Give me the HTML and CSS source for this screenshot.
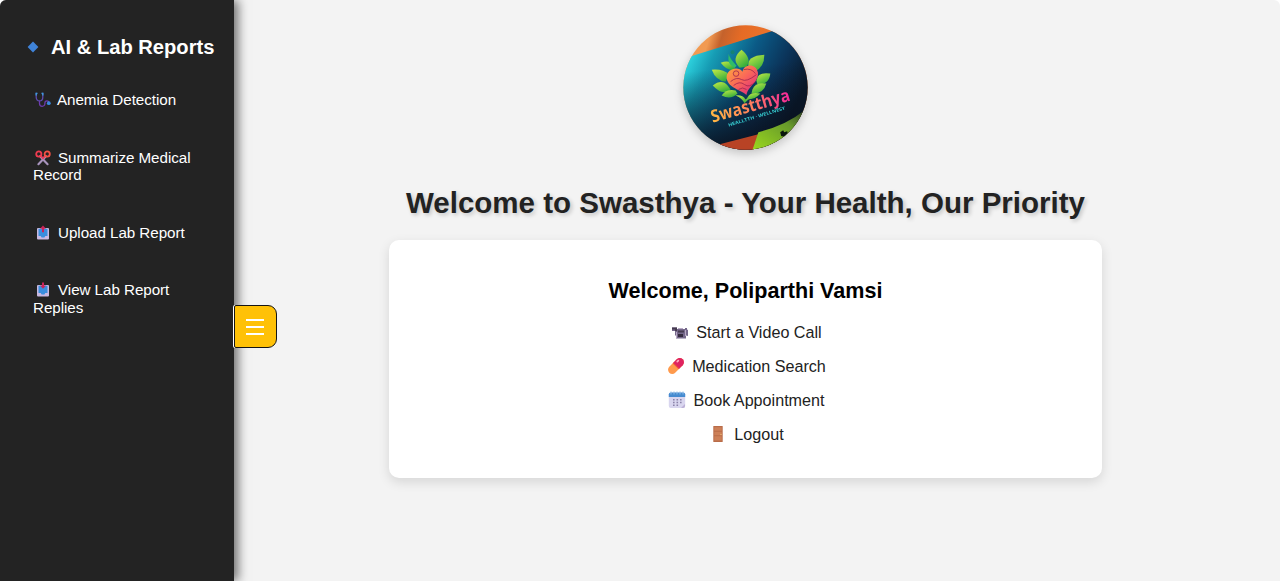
FILE: index.html
```html
<!DOCTYPE html>
<html lang="en">
<head>
<meta charset="utf-8">
<title>Swasthya</title>
<link rel="stylesheet" href="styles.css">
</head>
<body>
<div class="page">
  <aside class="sidebar">
    <h2 class="sidebar-title">
      <svg class="diamond" viewBox="0 0 12 12"><path d="M6 .6 11.4 6 6 11.4.6 6Z" fill="#3f83d8"/></svg>
      <span>AI &amp; Lab Reports</span>
    </h2>
    <nav class="side-nav">
      <a class="side-link"><svg class="side-icon" viewBox="0 0 16 16" fill="none"><path d="M2.3 1.5H1.2v3.7c0 5 6.6 5 6.6 0V1.5H6.7" stroke="#5f4bb0" stroke-width="1.3"/><path d="M1.2 3.4V1.3h1.2M7.8 3.4V1.3H6.6" stroke="#3aa0dc" stroke-width="1.3"/><path d="M4.5 9v2.4c0 3.8 5.4 3.8 5.4.2V11c0-2.8 4-2.8 4-.2" stroke="#6d3bae" stroke-width="1.3"/><circle cx="13.8" cy="11.2" r="1.9" fill="#3989dd"/></svg>Anemia Detection</a>
      <a class="side-link"><svg class="side-icon wide" viewBox="0 0 16 16" fill="none"><path d="m5 6.2 7.6 8M11 6.2l-7.6 8" stroke="#a894bd" stroke-width="2.1" stroke-linecap="round"/><path d="m6.2 6.3 1.8 2 1.8-2" stroke="#e53c5b" stroke-width="1.8"/><circle cx="3.8" cy="4" r="2.6" stroke="#f03b50" stroke-width="1.8"/><circle cx="12.2" cy="4" r="2.6" stroke="#f45045" stroke-width="1.8"/></svg>Summarize Medical Record</a>
      <a class="side-link"><svg class="side-icon wide" viewBox="0 0 16 16"><rect x="2" y="3" width="12" height="11.5" rx="1" fill="#c9b9e1"/><path d="M3.500 3.800h9v7.200h-2.200L9.400 12.500H6.600L5.700 11H3.500Z" fill="#3a8ede"/><path d="m8 .6 3 3.200H9v3.400H7V3.800H5Z" fill="#cc2359"/></svg>Upload Lab Report</a>
      <a class="side-link"><svg class="side-icon wide" viewBox="0 0 16 16"><rect x="2" y="3" width="12" height="11.5" rx="1" fill="#c9b9e1"/><path d="M3.500 3.800h9v7.200h-2.200L9.400 12.500H6.600L5.700 11H3.500Z" fill="#3a8ede"/><path d="M7 .4h2v3.200h2L8 6.800 5 3.600h2Z" fill="#cc2359"/></svg>View Lab Report Replies</a>
    </nav>
    <button class="toggle" aria-label="Menu"><svg class="bars" viewBox="0 0 18 18"><path d="M0 2h18M0 9h18M0 16h18" stroke="#fff" stroke-width="2"/></svg></button>
  </aside>
  <main class="main">
    <svg class="logo" viewBox="0 0 126 126">
      <defs>
        <clipPath id="disc"><circle cx="63" cy="63" r="62.7"/></clipPath>
        <linearGradient id="card" gradientUnits="userSpaceOnUse" x1="2" y1="36" x2="110" y2="88"><stop offset="0" stop-color="#31dbe5"/><stop offset=".2" stop-color="#169cb4"/><stop offset=".48" stop-color="#0b5a86"/><stop offset=".75" stop-color="#0b345a"/><stop offset="1" stop-color="#091829"/></linearGradient>
        <linearGradient id="shade" x1=".45" y1="0" x2=".55" y2="1"><stop offset=".3" stop-color="#081324" stop-opacity="0"/><stop offset="1" stop-color="#0a101c" stop-opacity=".95"/></linearGradient>
        <linearGradient id="top" x1="0" y1="0" x2="1" y2=".3"><stop offset="0" stop-color="#f39a50"/><stop offset=".22" stop-color="#f19a52"/><stop offset=".31" stop-color="#c4622c"/><stop offset=".45" stop-color="#e66b25"/><stop offset="1" stop-color="#f08135"/></linearGradient>
        <linearGradient id="leaf" x1="0" y1="0" x2=".6" y2="1"><stop offset="0" stop-color="#c8ec45"/><stop offset="1" stop-color="#35ad3c"/></linearGradient>
        <linearGradient id="heart" x1="0" y1="0" x2="1" y2="1"><stop offset="0" stop-color="#ffad3b"/><stop offset=".5" stop-color="#f9655a"/><stop offset="1" stop-color="#d51c85"/></linearGradient>
        <linearGradient id="word" x1="0" x2="1"><stop offset="0" stop-color="#ffb643"/><stop offset=".5" stop-color="#ff805c"/><stop offset="1" stop-color="#f3289a"/></linearGradient>
        <linearGradient id="lime" x1="0" y1="1" x2="1" y2="0"><stop offset="0" stop-color="#9bd91e"/><stop offset=".65" stop-color="#67992b"/><stop offset="1" stop-color="#273621"/></linearGradient>
      </defs>
      <g clip-path="url(#disc)">
        <path fill="url(#top)" d="M0 0h126v126H0z"/>
        <path d="M0 34 90 6l36 2v118H0Z" fill="url(#card)"/>
        <path d="M0 34 90 6l36 2v118H0Z" fill="url(#shade)"/>
        <path d="m34 121 42-11-4 16H30Z" fill="#b84325"/>
        <path d="M76 108q27-6 48-23v41H70Z" fill="url(#lime)"/>
        <path d="m98 108 3-2 1 2 3-1 1 4-3 2-4-1Z" fill="#0a170d"/>
        <g fill="url(#leaf)">
          <path d="M57 43q-9-9 2-18 11 9 5 17Z"/>
          <path d="M66 42q-2-11 16-12 0 13-10 17Z"/>
          <path d="M52 45q-7 2-14-7 10-4 14 4Z"/>
          <path d="M43 57q-10-1-14-12 12-1 17 5Z"/>
          <path d="M48 65q-8 7-18-4 9-7 15 0Z"/>
          <path d="M55 69q-7 7-16 2 5-7 14-5Z"/>
          <path d="M74 56q1-9 14-7-1 11-13 11Z"/>
          <path d="M70 65q3-8 14-6-3 11-15 10Z"/>
          <path d="M65 73q3-6 13-4-5 6-13 6Z"/>
          <path d="M53 71q7-1 10 4 3-3 6-3l-7 7q-2-5-9-8Z"/>
        </g>
        <path d="M52 43c-8-4-6-9-6-14q1 5 8 12" fill="#31bd67"/><circle cx="50" cy="27.5" r="2" fill="#168375"/>
        <path d="M60 47C61 39 74 38 75.500 48 76.500 58 66 61 64 70.500 58 65 46 64 44 54 43 44 56 41 60 47Z" fill="url(#heart)"/>
        <g fill="none" stroke="#9c254e" stroke-width=".8"><circle cx="53.500" cy="49" r="2.800"/><path d="M48 57q6-5 11-2t15-5M51 61q6-5 11-1t11-3M56 65q4-3 8 0M61 45q8-2 12 4"/></g>
      </g>
      <text class="logo-name" transform="translate(30 98.500) rotate(-16)" textLength="82" lengthAdjust="spacingAndGlyphs" fill="url(#word)">Swastthya</text>
      <text class="logo-tag" transform="translate(46 102.500) rotate(-17)" textLength="60" lengthAdjust="spacingAndGlyphs">HEALLTTH · WELLNESY</text>
    </svg>
    <h1 class="headline">Welcome to Swasthya - Your Health, Our Priority</h1>
    <section class="card">
      <h2 class="greeting">Welcome, Poliparthi Vamsi</h2>
      <nav class="menu">
        <a class="menu-link"><svg class="menu-icon" viewBox="0 0 18 18"><path d="M1 4.500h5V6h8V5h2v1.500l1 .5v6l-2-.5v3H5v-3H4V8H1Z" fill="#75688a"/><path d="M1 4.500h5V8H4V6.500H1ZM7 7.500h6v2H7Z" fill="#463b50"/><path d="M7 11h5v3H7Z" fill="#342b3e"/><path d="M5 9h1v6H5Zm9-2h1v6h-1ZM7 5h5v1H7Z" fill="#b8a9c5"/></svg>Start a Video Call</a>
        <a class="menu-link"><svg class="menu-icon" viewBox="0 0 18 18"><g transform="rotate(-45 9 9)"><rect x="-.5" y="4.800" width="19" height="8.400" rx="4.200" fill="#ff9a4c"/><path d="M9 4.800h5.300a4.200 4.200 0 0 1 0 8.400H9Z" fill="#df2361"/><path d="M13 6.800h1.500" stroke="#ffabc0" stroke-width="1.700" stroke-linecap="round"/><path d="M9 4.800v8.400" stroke="#ef563f"/></g></svg>Medication Search</a>
        <a class="menu-link"><svg class="menu-icon" viewBox="0 0 18 18"><rect x=".8" y="1.500" width="16.400" height="15.500" rx="2" fill="#d9d6ef"/><path d="M.8 6V3.500q0-2 2-2h12.400q2 0 2 2V6Z" fill="#468bd0"/><path d="M3 .5v3M6 .5v3M9 .5v3M12 .5v3M15 .5v3" stroke="#89bde7"/><path d="M5 8.700h9M5 11.500h9M5 14.300h7" stroke="#8b82a9" stroke-width="1.400" stroke-dasharray="1.600 1.900"/><path d="m13 17 4-4v2q0 2-2 2Z" fill="#bcb0d6"/></svg>Book Appointment</a>
        <a class="menu-link"><svg class="menu-icon" viewBox="0 0 18 18"><rect x="4.300" y="1" width="9.400" height="16" rx=".6" fill="#b96c49"/><path d="M5.300 2.300h7.400v3.500H5.300Zm0 4.500h7.400v3.500H5.300Zm0 4.500h7.400v4.300H5.300Z" fill="#cd8058"/><circle cx="12" cy="9.500" r=".7" fill="#eebc77"/></svg>Logout</a>
      </nav>
    </section>
  </main>
</div>
</body>
</html>
```
FILE: styles.css
```css
* { box-sizing: border-box; }
body { margin: 0; background: #fff; font-family: "Liberation Sans", Arial, sans-serif; }
.page { display: flex; height: 581px; background: #f3f3f3; border-radius: 6px 6px 0 0; overflow: hidden; }
.sidebar { position: relative; flex: none; width: 234px; padding: 35px 20px 0 25px; background: #232323; color: #fff; box-shadow: 4px 0 10px rgba(0,0,0,.55); }
.sidebar-title { display: flex; align-items: center; gap: 11px; margin: 0; font-size: 20.15px; line-height: 24px; white-space: nowrap; }
.diamond { flex: none; width: 12px; height: 12px; margin: 0 1px 0 2px; }
.side-nav { display: flex; flex-direction: column; gap: 40px; padding: 32px 0 0 8px; }
.side-link { font-size: 15.2px; line-height: 17.6px; letter-spacing: -.05px; color: #fff; }
.side-icon { width: 16px; height: 16px; margin: -2px 6px -3px 2px; vertical-align: baseline; }
.side-icon.wide { margin-right: 7px; }
.toggle { position: absolute; left: 234px; top: 305px; width: 43px; height: 43px; display: grid; place-items: center; padding: 1px 1px 0 0; background: #ffc107; border: 1.5px solid #151515; border-radius: 2px 9px 9px 2px; box-shadow: -1px 0 0 #fff; }
.bars { width: 18px; height: 18px; }
.main { flex: 1; display: flex; flex-direction: column; align-items: center; padding: 25px 23px 0 0; }
.main > * { flex: none; }
.logo { width: 125px; height: 125px; filter: drop-shadow(0 3px 5px rgba(0,0,0,.2)); }
.logo-name { font: bold 17.5px "Open Sans", sans-serif; }
.logo-tag { font: bold 4.6px "Open Sans", sans-serif; fill: #36cbd0; }
.headline { margin: 35px 0 0; font-size: 29.53px; line-height: 36px; color: #222; text-shadow: 2px 2px 4px rgba(0,0,0,.2); white-space: nowrap; }
.card { width: 713px; height: 238px; margin-top: 19px; padding: 38px 24px 0; background: #fff; border-radius: 10px; box-shadow: 0 4px 12px rgba(0,0,0,.12); text-align: center; }
.greeting { margin: 0; font-size: 21.55px; line-height: 26px; color: #000; }
.menu { display: flex; flex-direction: column; align-items: center; gap: 14px; margin: 18px 0 0 2px; }
.menu-link { display: flex; align-items: center; gap: 7px; height: 20px; font-size: 16.15px; color: #222; }
.menu-icon { width: 18px; height: 18px; }
```
